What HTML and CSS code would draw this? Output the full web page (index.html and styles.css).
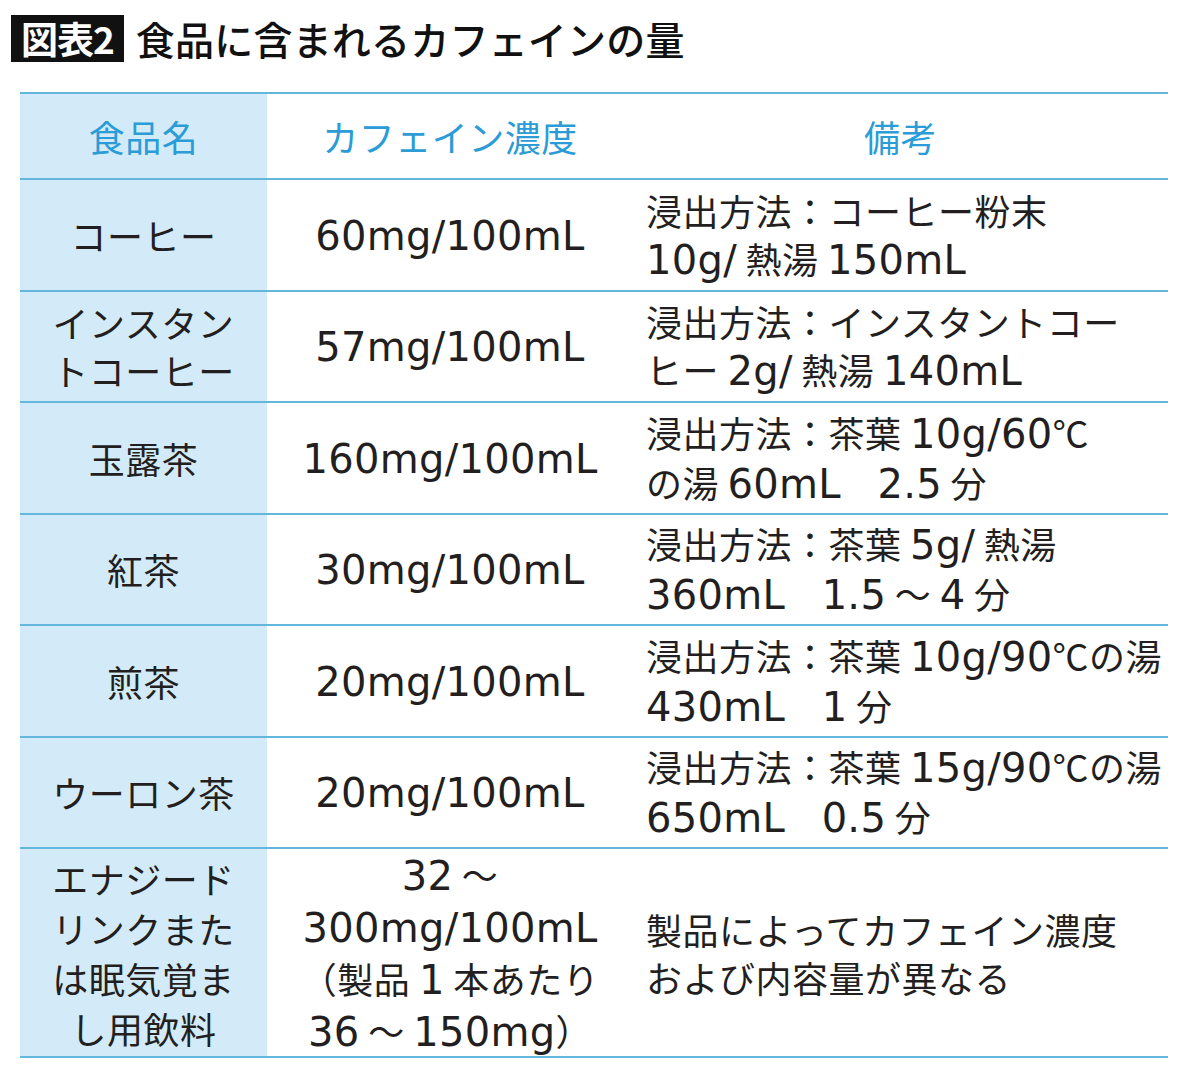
FILE: index.html
```html
<!DOCTYPE html>
<html lang="ja">
<head>
<meta charset="utf-8">
<title>図表2 食品に含まれるカフェインの量</title>
<link rel="stylesheet" href="styles.css">
</head>
<body>
<div class="page">
  <div class="title">
    <div class="tag">図表2</div>
    <div class="heading">食品に含まれるカフェインの量</div>
  </div>
  <div class="table">
    <div class="cell name head"><div class="txt">食品名</div></div>
    <div class="cell conc head"><div class="txt">カフェイン濃度</div></div>
    <div class="cell memo head center"><div class="txt">備考</div></div>

    <div class="cell name"><div class="txt">コーヒー</div></div>
    <div class="cell conc"><div class="txt"><span class="en">60mg/100mL</span></div></div>
    <div class="cell memo"><div class="txt">浸出方法：コーヒー粉末<br><span class="en">10g/</span> 熱湯 <span class="en">150mL</span></div></div>

    <div class="cell name"><div class="txt">インスタン<br>トコーヒー</div></div>
    <div class="cell conc"><div class="txt"><span class="en">57mg/100mL</span></div></div>
    <div class="cell memo"><div class="txt">浸出方法：インスタントコー<br>ヒー <span class="en">2g/</span> 熱湯 <span class="en">140mL</span></div></div>

    <div class="cell name"><div class="txt">玉露茶</div></div>
    <div class="cell conc"><div class="txt"><span class="en">160mg/100mL</span></div></div>
    <div class="cell memo"><div class="txt">浸出方法：茶葉 <span class="en">10g/60</span>℃<br>の湯 <span class="en">60mL</span>　<span class="en">2.5</span> 分</div></div>

    <div class="cell name"><div class="txt">紅茶</div></div>
    <div class="cell conc"><div class="txt"><span class="en">30mg/100mL</span></div></div>
    <div class="cell memo"><div class="txt">浸出方法：茶葉 <span class="en">5g/</span> 熱湯<br><span class="en">360mL</span>　<span class="en">1.5</span> ～ <span class="en">4</span> 分</div></div>

    <div class="cell name"><div class="txt">煎茶</div></div>
    <div class="cell conc"><div class="txt"><span class="en">20mg/100mL</span></div></div>
    <div class="cell memo"><div class="txt">浸出方法：茶葉 <span class="en">10g/90</span>℃の湯<br><span class="en">430mL</span>　<span class="en">1</span> 分</div></div>

    <div class="cell name"><div class="txt">ウーロン茶</div></div>
    <div class="cell conc"><div class="txt"><span class="en">20mg/100mL</span></div></div>
    <div class="cell memo"><div class="txt">浸出方法：茶葉 <span class="en">15g/90</span>℃の湯<br><span class="en">650mL</span>　<span class="en">0.5</span> 分</div></div>

    <div class="cell name last"><div class="txt">エナジード<br>リンクまた<br>は眠気覚ま<br>し用飲料</div></div>
    <div class="cell conc last"><div class="txt"><span class="en">32</span> ～<br><span class="en">300mg/100mL</span><br>（製品 <span class="en">1</span> 本あたり<br><span class="en">36</span> ～ <span class="en">150mg</span>）</div></div>
    <div class="cell memo last"><div class="txt">製品によってカフェイン濃度<br>および内容量が異なる</div></div>
  </div>
</div>
</body>
</html>
```

FILE: styles.css
```css
html, body {
  margin: 0;
  padding: 0;
  background: #ffffff;
}

body {
  font-family: "Noto Sans CJK JP", "Noto Sans", sans-serif;
  color: #231f20;
}

.page {
  width: 1200px;
  height: 1076px;
  padding-top: 15px;
  box-sizing: border-box;
  overflow: hidden;
}

.title {
  display: flex;
  align-items: center;
  margin-left: 11px;
  height: 47px;
}

.tag {
  height: 47px;
  box-sizing: border-box;
  padding: 0 10px;
  background: #111111;
  color: #ffffff;
  font-size: 37px;
  font-weight: 700;
  line-height: 47px;
  letter-spacing: -1px;
}

.heading {
  margin-left: 12px;
  font-size: 39px;
  font-weight: 500;
  line-height: 47px;
  letter-spacing: 0.2px;
  color: #111111;
}

.table {
  margin: 30px 0 0 20px;
  width: 1148px;
  display: grid;
  grid-template-columns: 247px 366px 535px;
  grid-template-rows: 86px repeat(6, 111.5px) 211px;
}

.cell {
  box-sizing: border-box;
  border-top: 2px solid #63b7dd;
  display: flex;
  align-items: center;
  font-size: 36px;
  line-height: 48px;
  letter-spacing: 0.5px;
  white-space: nowrap;
}

.cell.last {
  border-bottom: 2px solid #63b7dd;
}

.name {
  background: #d3ebf8;
  justify-content: center;
  text-align: center;
}

.conc {
  justify-content: center;
  text-align: center;
}

.memo {
  padding-left: 13px;
}

.memo.center {
  padding-left: 0;
  justify-content: center;
}

.head {
  color: #2b9cd6;
}

.last.name,
.last.conc {
  line-height: 50px;
}

.en {
  font-family: "DejaVu Sans", "Noto Sans", sans-serif;
  font-size: 40px;
  letter-spacing: 0.3px;
}
```
